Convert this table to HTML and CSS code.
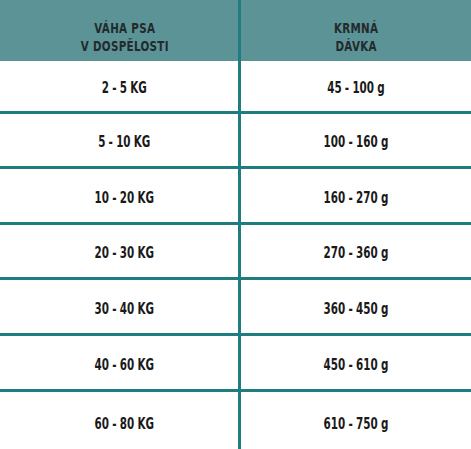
FILE: index.html
```html
<!DOCTYPE html>
<html lang="cs">
<head>
<meta charset="utf-8">
<link rel="stylesheet" href="styles.css">
</head>
<body>
<div class="table">
  <div class="row head">
    <div class="cell left"><span class="txt">VÁHA PSA<br>V DOSPĚLOSTI</span></div>
    <div class="cell right"><span class="txt">KRMNÁ<br>DÁVKA</span></div>
  </div>
  <div class="row r1"><div class="cell left"><span class="txt">2 - 5 KG</span></div><div class="cell right"><span class="txt">45 - 100 g</span></div></div>
  <div class="row r2"><div class="cell left"><span class="txt">5 - 10 KG</span></div><div class="cell right"><span class="txt">100 - 160 g</span></div></div>
  <div class="row r3"><div class="cell left"><span class="txt">10 - 20 KG</span></div><div class="cell right"><span class="txt">160 - 270 g</span></div></div>
  <div class="row r2"><div class="cell left"><span class="txt">20 - 30 KG</span></div><div class="cell right"><span class="txt">270 - 360 g</span></div></div>
  <div class="row r3"><div class="cell left"><span class="txt">30 - 40 KG</span></div><div class="cell right"><span class="txt">360 - 450 g</span></div></div>
  <div class="row r3"><div class="cell left"><span class="txt">40 - 60 KG</span></div><div class="cell right"><span class="txt">450 - 610 g</span></div></div>
  <div class="row r7"><div class="cell left"><span class="txt">60 - 80 KG</span></div><div class="cell right"><span class="txt">610 - 750 g</span></div></div>
</div>
</body>
</html>
```
FILE: styles.css
```css
html, body {
  margin: 0;
  padding: 0;
  background: #ffffff;
}
.table {
  width: 471px;
  height: 449px;
  overflow: hidden;
  font-family: "DejaVu Sans Condensed", "Liberation Sans Narrow", sans-serif;
  font-weight: bold;
  color: #1a1a1a;
}
.row {
  display: flex;
  box-sizing: border-box;
}
.cell {
  display: flex;
  align-items: center;
  justify-content: center;
  text-align: center;
  font-size: 16px;
  padding-top: 3px;
  box-sizing: border-box;
}
.txt {
  display: inline-block;
  white-space: nowrap;
  transform: scaleX(0.72);
  word-spacing: -0.5px;
}
.left {
  width: 241px;
  padding-left: 10px;
  border-right: 3px solid #1f7c81;
}
.right {
  flex: 1;
}
.head {
  height: 61px;
  background: #5b9397;
}
.head .cell {
  font-size: 14px;
  line-height: 18px;
  color: #232a2b;
  padding-top: 13px;
}
.head .left {
  padding-left: 12px;
}
.head .txt {
  transform: scaleX(0.82);
  letter-spacing: 0.4px;
  word-spacing: 0;
}
.r1 { height: 50px; }
.r2 { height: 55px; border-top: 3px solid #1f7c81; }
.r3 { height: 56px; border-top: 3px solid #1f7c81; }
.r7 { height: 63px; border-top: 3px solid #1f7c81; }
```
